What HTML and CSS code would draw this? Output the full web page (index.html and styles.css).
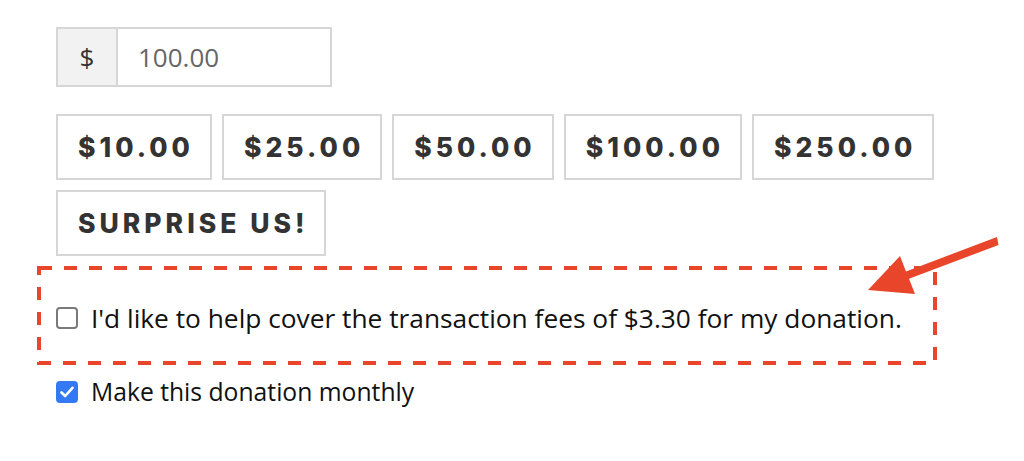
FILE: index.html
```html
<!DOCTYPE html>
<html lang="en">
<head>
    <meta charset="UTF-8">
    <meta name="viewport" content="width=device-width, initial-scale=1.0">
    <title>Donation Form</title>
    <link rel="stylesheet" href="styles.css">
</head>
<body>

<div class="donate-form">
    <div class="amount-group">
        <span class="currency">$</span>
        <input type="text" class="amount-input" value="100.00">
    </div>

    <div class="levels">
        <button class="level">$10.00</button>
        <button class="level">$25.00</button>
        <button class="level">$50.00</button>
        <button class="level">$100.00</button>
        <button class="level">$250.00</button>
        <button class="level">Surprise Us!</button>
    </div>

    <div class="highlight">
        <svg class="dashes" width="900" height="99" viewBox="0 0 900 99">
            <rect x="2" y="2" width="896" height="95" fill="none" stroke="#e9452b" stroke-width="4" stroke-dasharray="13 12"/>
        </svg>
        <label class="check fee">
            <input type="checkbox">
            <span class="box"></span>
            <span>I'd like to help cover the transaction fees of $3.30 for my donation.</span>
        </label>
        <svg class="arrow" width="142" height="64" viewBox="0 0 142 64">
            <path d="M139 3 L140.5 11 L51 44.7 L57 60 L10 56 L42 22 L48 37.4 Z" fill="#e9452b"/>
        </svg>
    </div>

    <label class="check monthly">
        <input type="checkbox" checked>
        <span class="box">
            <svg width="14" height="12" viewBox="0 0 14 12">
                <path d="M1.5 6.5 L5.2 10 L12.5 1.8" fill="none" stroke="#fff" stroke-width="2.6" stroke-linecap="round" stroke-linejoin="round"/>
            </svg>
        </span>
        <span>Make this donation monthly</span>
    </label>
</div>

</body>
</html>
```

FILE: styles.css
```css
body {
    margin: 0;
    padding: 0;
    background-color: #fff;
    font-family: 'Open Sans', sans-serif;
    color: #111;
}

.donate-form {
    padding: 27px 0 0 56px;
    width: 890px;
}

.amount-group {
    display: flex;
    width: 276px;
    height: 60px;
    border: 2px solid #d6d6d6;
    box-sizing: border-box;
}

.currency {
    width: 58px;
    background-color: #f2f2f2;
    border-right: 2px solid #d6d6d6;
    display: flex;
    align-items: center;
    justify-content: center;
    font-size: 26px;
    color: #333;
}

.amount-input {
    flex: 1;
    min-width: 0;
    border: none;
    outline: none;
    padding: 0 0 0 20px;
    font-family: 'Open Sans', sans-serif;
    font-size: 26px;
    color: #666;
}

.levels {
    display: flex;
    flex-wrap: wrap;
    gap: 10px 10px;
    margin-top: 27px;
    width: 890px;
}

.level {
    height: 66px;
    padding: 0 16px 0 20px;
    background: #fff;
    border: 2px solid #d6d6d6;
    font-family: 'Inter', sans-serif;
    font-weight: 800;
    font-size: 26.5px;
    letter-spacing: 4px;
    text-transform: uppercase;
    color: #333;
    cursor: pointer;
}

.highlight {
    position: relative;
    margin: 10px 0 0 -19px;
    width: 900px;
    height: 99px;
    box-sizing: border-box;
    display: flex;
    align-items: center;
    padding: 4px 0 0 19px;
}

.dashes {
    position: absolute;
    left: 0;
    top: 0;
}

.check {
    position: relative;
    display: flex;
    align-items: center;
    gap: 13px;
    font-size: 24.7px;
    line-height: 34px;
}

.check.fee {
    font-size: 26.3px;
}

.check input {
    position: absolute;
    opacity: 0;
    width: 0;
    height: 0;
    margin: 0;
}

.box {
    width: 22px;
    height: 22px;
    box-sizing: border-box;
    border: 2px solid #7a7a7a;
    border-radius: 4px;
    background: #fff;
    display: flex;
    align-items: center;
    justify-content: center;
}

.check input:checked + .box {
    background: #3479f4;
    border-color: #3479f4;
}

.arrow {
    position: absolute;
    left: 821px;
    top: -32px;
}

.monthly {
    margin-top: 10px;
}
```
